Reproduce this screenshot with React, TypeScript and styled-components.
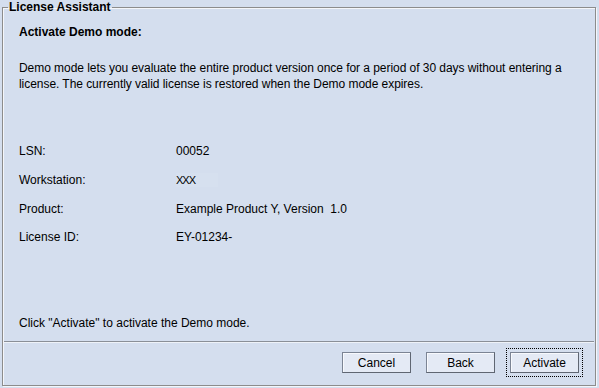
import React from 'react';
import styled, { createGlobalStyle } from 'styled-components';

const GlobalStyle = createGlobalStyle`
    html, body {
        margin: 0;
        padding: 0;
        background: #d4deee;
    }
    body {
        font-family: 'Liberation Sans', Arial, sans-serif;
        font-size: 12px;
        color: #000;
    }
`;

const Window = styled.div`
    width: 599px;
    height: 388px;
    box-sizing: border-box;
    padding: 0 3px 2px 2px;
    background: #d4deee;
    display: flex;
`;

const Frame = styled.fieldset`
    flex: 1;
    margin: 0;
    padding: 0;
    min-width: 0;
    border: 1px solid #8c8c8c;
    box-shadow: 1px 1px 0 #f4f6fa, inset 1px 1px 0 #f4f6fa;
    display: flex;
    flex-direction: column;
`;

const Legend = styled.legend`
    margin-left: 5px;
    padding: 0 1px;
    font-weight: bold;
    font-size: 12px;
    line-height: 14px;
    color: #000;
`;

const Body = styled.div`
    flex: 1;
    display: flex;
    flex-direction: column;
    padding: 11px 16px 0 16px;
`;

const Heading = styled.div`
    font-weight: bold;
    line-height: 14px;
`;

const Paragraph = styled.p`
    margin: 21px 0 0 0;
    line-height: 16px;
    letter-spacing: -0.05px;
`;

const Details = styled.div`
    margin-top: 52px;
    display: grid;
    grid-template-columns: 157px 1fr;
    row-gap: 14px;
    align-items: center;
`;

const Label = styled.div<{ $height?: number }>`
    line-height: 14px;
    height: ${p => p.$height ?? 14}px;
    display: flex;
    align-items: center;
`;

const Value = styled(Label)``;

const Masked = styled.span`
    display: inline-block;
    width: 42px;
    height: 14px;
    line-height: 14px;
    background: #d6e0ef;
    font-size: 11px;
    letter-spacing: -1px;
`;

const Hint = styled.div`
    margin-top: auto;
    line-height: 14px;
    padding-bottom: 11px;
`;

const Separator = styled.hr`
    margin: 0 1px;
    border: none;
    border-top: 1px solid #8a8f97;
    border-bottom: 1px solid #eef2f8;
`;

const ButtonBar = styled.div`
    display: flex;
    justify-content: flex-end;
    gap: 15px;
    padding: 9px 16px 12px 0;
`;

const Button = styled.button<{ $focused?: boolean }>`
    width: 69px;
    height: 21px;
    padding: 0;
    font-family: 'Liberation Sans', Arial, sans-serif;
    font-size: 12px;
    color: #000;
    background: #e4eaf5;
    border: 1px solid #7b8494;
    border-right-color: #5f6672;
    border-bottom-color: #5f6672;
    box-shadow: inset 1px 1px 0 #f7f9fd;
    outline: ${p => (p.$focused ? '1px dotted #000' : 'none')};
    outline-offset: 3px;
    cursor: pointer;
`;

const buttons = [
    { label: 'Cancel', focused: false },
    { label: 'Back', focused: false },
    { label: 'Activate', focused: true },
];

const App = () => {
    return (
        <>
            <GlobalStyle />
            <Window>
                <Frame>
                    <Legend>License Assistant</Legend>
                    <Body>
                        <Heading>Activate Demo mode:</Heading>
                        <Paragraph>
                            Demo mode lets you evaluate the entire product version once for a period of 30 days without entering a
                            license. The currently valid license is restored when the Demo mode expires.
                        </Paragraph>
                        <Details>
                            <Label>LSN:</Label>
                            <Value>00052</Value>
                            <Label $height={16}>Workstation:</Label>
                            <Value $height={16}><Masked>XXX</Masked></Value>
                            <Label>Product:</Label>
                            <Value>Example Product Y, Version&nbsp; 1.0</Value>
                            <Label>License ID:</Label>
                            <Value>EY-01234-</Value>
                        </Details>
                        <Hint>Click "Activate" to activate the Demo mode.</Hint>
                    </Body>
                    <Separator />
                    <ButtonBar>
                        {buttons.map(b => (
                            <Button key={b.label} $focused={b.focused}>{b.label}</Button>
                        ))}
                    </ButtonBar>
                </Frame>
            </Window>
        </>
    );
};

export default App;
